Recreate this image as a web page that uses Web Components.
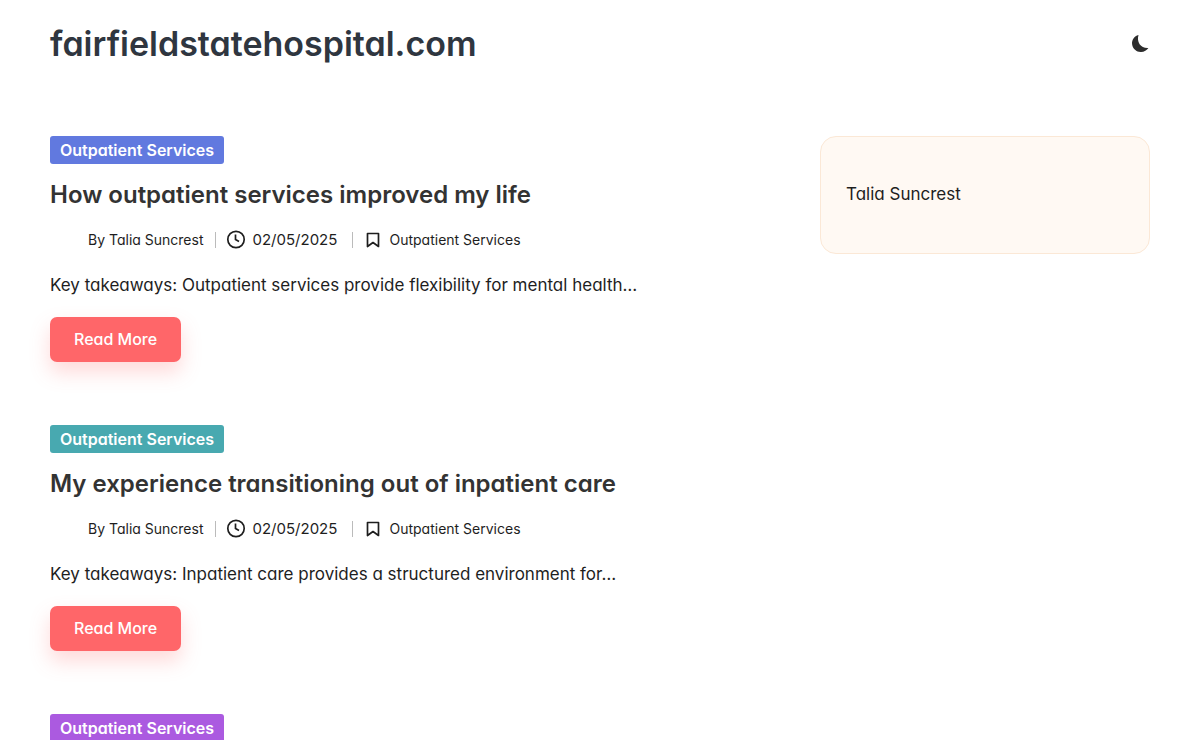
<!DOCTYPE html>
<html lang="en">
<head>
<meta charset="utf-8">
<meta name="viewport" content="width=device-width, initial-scale=1">
<title>fairfieldstatehospital.com</title>
<style>
  body {
    margin: 0;
    background: #fff;
    color: #1e1e1e;
    font-family: Inter, "Open Sans", sans-serif;
    font-feature-settings: "cv11";
    font-size: 17px;
    line-height: 28px;
  }
</style>
</head>
<body>
<blog-page>
  <site-header slot="header" name="fairfieldstatehospital.com"></site-header>
  <post-card style="--tag: #6179df" category="Outpatient Services" author="Talia Suncrest" date="02/05/2025" heading="How outpatient services improved my life">Key takeaways: Outpatient services provide flexibility for mental health…</post-card>
  <post-card style="--tag: #48a9b0" category="Outpatient Services" author="Talia Suncrest" date="02/05/2025" heading="My experience transitioning out of inpatient care">Key takeaways: Inpatient care provides a structured environment for…</post-card>
  <post-card style="--tag: #ab5ae0" category="Outpatient Services" author="Talia Suncrest" date="02/05/2025" heading="What I learned from outpatient therapy">Key takeaways: Outpatient therapy offers support in daily life…</post-card>
  <side-widget slot="side">Talia Suncrest</side-widget>
</blog-page>
<script>
const define = (name, markup) => {
  const template = document.createElement('template');
  template.innerHTML = markup;
  customElements.define(name, class extends HTMLElement {
    constructor() {
      super();
      this.attachShadow({ mode: 'open' }).append(template.content.cloneNode(true));
    }
    connectedCallback() {
      this.shadowRoot.querySelectorAll('[data-text]').forEach(node => {
        node.textContent = this.getAttribute(node.dataset.text);
      });
    }
  });
};

define('blog-page', `
  <style>
    :host { display: block; height: 100vh; overflow: hidden auto; scrollbar-width: none; }
    .wrap { max-width: 1100px; margin: 0 auto; padding: 0 50px; }
    .columns { display: grid; grid-template-columns: minmax(0, 1fr) 330px; gap: 50px; align-items: start; padding-top: 48px; }
    main { display: grid; gap: 63px; }
    @media (max-width: 800px) { .columns { grid-template-columns: 1fr; } }
  </style>
  <div class="wrap">
    <slot name="header"></slot>
    <div class="columns">
      <main><slot></slot></main>
      <aside><slot name="side"></slot></aside>
    </div>
  </div>`);

define('site-header', `
  <style>
    :host { display: block; }
    header { display: flex; align-items: center; justify-content: space-between; min-height: 88px; }
    a { color: #2f3640; text-decoration: none; font-size: 34px; line-height: 48px; font-weight: 600; }
    button { display: flex; padding: 0; border: 0; background: none; color: #2d2d2d; cursor: pointer; }
    svg { display: block; width: 20px; height: 20px; }
  </style>
  <header>
    <a href="#" data-text="name"></a>
    <button type="button" aria-label="Switch to dark mode">
      <svg viewBox="0 0 20 20" fill="currentColor"><path d="M8.500 1C4.200 2.200 1.600 6 2.100 10.200c.7 4.800 4.700 8 9 7.700 3.100-.2 5.800-1.600 7.300-4-3.800.3-6.900-1-8.800-3.700C7.900 7.600 7.500 4.200 8.500 1z"/></svg>
    </button>
  </header>`);

define('post-card', `
  <style>
    :host { display: block; }
    article { display: flex; flex-direction: column; align-items: flex-start; }
    a { color: inherit; text-decoration: none; }
    .tag { padding: 0 10px; border-radius: 3px; background: var(--tag); color: #fff; font-size: 16px; line-height: 28px; font-weight: 600; }
    h2 { margin: 14px 0 0; color: #333; font-size: 24px; line-height: 34px; font-weight: 600; }
    .meta { display: flex; align-items: center; margin-top: 16px; padding-left: 38px; font-size: 14px; line-height: 24px; }
    .meta > * + * { display: flex; align-items: center; }
    .meta > * + *::before { content: ""; width: 1px; height: 16px; margin: 0 10px 0 12px; background: #bbb; }
    time { min-width: 88px; font-size: 15px; }
    svg { width: 20px; height: 20px; margin-right: 6px; fill: none; stroke: currentColor; stroke-width: 1.700; }
    p { margin: 19px 0 0; }
    .more { margin-top: 18px; padding: 0 24px; border-radius: 7px; background: #ff6669; color: #fff; font-size: 16px; line-height: 45px; font-weight: 500; box-shadow: 0 10px 20px rgba(255, 102, 105, .25); }
  </style>
  <article>
    <a class="tag" href="#" data-text="category"></a>
    <h2><a href="#" data-text="heading"></a></h2>
    <div class="meta">
      <span>By <a href="#" data-text="author"></a></span>
      <span><svg viewBox="0 0 20 20" aria-hidden="true"><circle cx="10" cy="9.500" r="8.200"/><path d="M9.500 4.500v5l3.500 2"/></svg><time data-text="date"></time></span>
      <span><svg viewBox="0 0 20 20" aria-hidden="true"><path d="M4.500 3.500h11v13l-5.500-4-5.500 4z" stroke-linejoin="round"/></svg><a href="#" data-text="category"></a></span>
    </div>
    <p><slot></slot></p>
    <a class="more" href="#">Read More</a>
  </article>`);

define('side-widget', `
  <style>
    :host { display: block; padding: 43px 25px 45px; border: 1px solid #fbe8d6; border-radius: 16px; background: #fff9f3; }
  </style>
  <slot></slot>`);
</script>
</body>
</html>
